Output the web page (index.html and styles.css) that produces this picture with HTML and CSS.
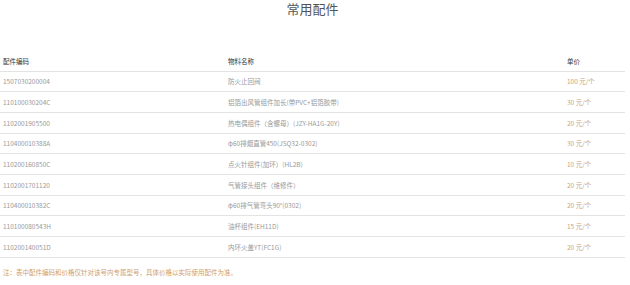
FILE: index.html
```html
<!DOCTYPE html>
<html lang="zh">
<head>
<meta charset="utf-8">
<link rel="stylesheet" href="styles.css">
</head>
<body>
<div class="page">
  <h1 class="title">常用配件</h1>
  <div class="table">
    <div class="row head">
      <div class="c1">配件编码</div><div class="c2">物料名称</div><div class="c3">单价</div>
    </div>
    <div class="row"><div class="c1">1507030200004</div><div class="c2">防火止回阀</div><div class="c3 price">100 元/个</div></div>
    <div class="row"><div class="c1">110100030204C</div><div class="c2">铝箔出风管组件加长(带PVC+铝箔胶带)</div><div class="c3 price">30 元/个</div></div>
    <div class="row"><div class="c1">1102001905500</div><div class="c2">热电偶组件（含螺母）(JZY-HA1G-20Y)</div><div class="c3 price">20 元/个</div></div>
    <div class="row"><div class="c1">110400010388A</div><div class="c2">φ60排烟直管450(JSQ32-0302)</div><div class="c3 price">30 元/个</div></div>
    <div class="row"><div class="c1">110200160850C</div><div class="c2">点火针组件(加环）(HL2B)</div><div class="c3 price">10 元/个</div></div>
    <div class="row"><div class="c1">1102001701120</div><div class="c2">气管接头组件（维修件）</div><div class="c3 price">20 元/个</div></div>
    <div class="row"><div class="c1">110400010382C</div><div class="c2">φ60排气管弯头90°(0302)</div><div class="c3 price">20 元/个</div></div>
    <div class="row"><div class="c1">110100080543H</div><div class="c2">油杯组件(EH11D)</div><div class="c3 price">15 元/个</div></div>
    <div class="row"><div class="c1">110200140051D</div><div class="c2">内环火盖YT(FC1G)</div><div class="c3 price">20 元/个</div></div>
  </div>
  <p class="note">注：表中配件编码和价格仅针对该号内专属型号，具体价格以实际使用配件为准。</p>
</div>
</body>
</html>
```
FILE: styles.css
```css
html, body {
  margin: 0;
  padding: 0;
  background: #fff;
}
.page {
  width: 625px;
  font-family: "Noto Sans CJK SC", "Liberation Sans", sans-serif;
}
.title {
  margin: 0;
  height: 18px;
  line-height: 18px;
  font-size: 13px;
  font-weight: normal;
  color: #555;
  text-align: center;
}
.table {
  margin-top: 33px;
}
.row {
  display: grid;
  grid-template-columns: 225px 339px 61px;
  height: 19.67px;
  align-items: center;
  border-bottom: 1px solid #e3e3e3;
  font-size: 6.5px;
  color: #999;
}
.row > div {
  padding-left: 3px;
  white-space: nowrap;
}
.row.head {
  color: #333;
}
.price {
  color: #c9a482;
}
.note {
  margin: 8px 0 0;
  padding-left: 3px;
  font-size: 6.5px;
  line-height: 12px;
  color: #d0a070;
}
```
